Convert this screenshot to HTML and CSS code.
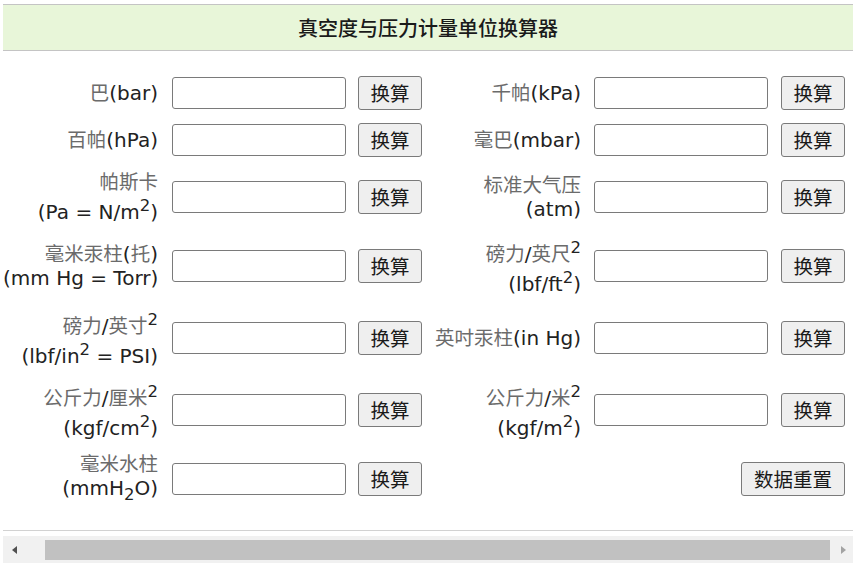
FILE: index.html
```html
<!DOCTYPE html>
<html lang="zh-CN">
<head>
<meta charset="utf-8">
<title>真空度与压力计量单位换算器</title>
<link rel="stylesheet" href="styles.css">
</head>
<body>
<div class="page">
  <div class="title-bar">真空度与压力计量单位换算器</div>
  <div class="grid">
    <label class="lbl"><span class="cn">巴</span>(bar)</label>
    <input class="field" type="text">
    <button class="btn">换算</button>
    <label class="lbl lbl-r"><span class="cn">千帕</span>(kPa)</label>
    <input class="field" type="text">
    <button class="btn">换算</button>

    <label class="lbl"><span class="cn">百帕</span>(hPa)</label>
    <input class="field" type="text">
    <button class="btn">换算</button>
    <label class="lbl lbl-r"><span class="cn">毫巴</span>(mbar)</label>
    <input class="field" type="text">
    <button class="btn">换算</button>

    <label class="lbl"><span class="cn">帕斯卡</span><br>(Pa = N/m<sup>2</sup>)</label>
    <input class="field" type="text">
    <button class="btn">换算</button>
    <label class="lbl lbl-r"><span class="cn">标准大气压</span><br>(atm)</label>
    <input class="field" type="text">
    <button class="btn">换算</button>

    <label class="lbl"><span class="cn">毫米汞柱</span>(<span class="cn">托</span>)<br>(mm Hg = Torr)</label>
    <input class="field" type="text">
    <button class="btn">换算</button>
    <label class="lbl lbl-r"><span class="cn">磅力</span>/<span class="cn">英尺</span><sup>2</sup><br>(lbf/ft<sup>2</sup>)</label>
    <input class="field" type="text">
    <button class="btn">换算</button>

    <label class="lbl"><span class="cn">磅力</span>/<span class="cn">英寸</span><sup>2</sup><br>(lbf/in<sup>2</sup> = PSI)</label>
    <input class="field" type="text">
    <button class="btn">换算</button>
    <label class="lbl lbl-r"><span class="cn">英吋汞柱</span>(in Hg)</label>
    <input class="field" type="text">
    <button class="btn">换算</button>

    <label class="lbl"><span class="cn">公斤力</span>/<span class="cn">厘米</span><sup>2</sup><br>(kgf/cm<sup>2</sup>)</label>
    <input class="field" type="text">
    <button class="btn">换算</button>
    <label class="lbl lbl-r"><span class="cn">公斤力</span>/<span class="cn">米</span><sup>2</sup><br>(kgf/m<sup>2</sup>)</label>
    <input class="field" type="text">
    <button class="btn">换算</button>

    <label class="lbl"><span class="cn">毫米水柱</span><br>(mmH<sub>2</sub>O)</label>
    <input class="field" type="text">
    <button class="btn">换算</button>
    <button class="btn btn-reset">数据重置</button>
  </div>
  <div class="sep"></div>
  <div class="hscroll">
    <div class="arrow-btn arrow-left"><span class="tri-left"></span></div>
    <div class="thumb"></div>
    <div class="arrow-btn arrow-right"><span class="tri-right"></span></div>
  </div>
</div>
</body>
</html>
```
FILE: styles.css
```css
html, body {
  margin: 0;
  padding: 0;
  background: #ffffff;
}

.page {
  padding: 4px 0 0 3px;
  font-family: "DejaVu Sans", "Noto Sans CJK SC", sans-serif;
  color: #222222;
}

.title-bar {
  height: 45px;
  border-top: 1px solid #c4c4c4;
  border-bottom: 1px solid #c4c4c4;
  background: #e8f6d9;
  display: flex;
  align-items: center;
  justify-content: center;
  font-family: "Noto Sans CJK SC", sans-serif;
  font-size: 20px;
  font-weight: 500;
  color: #1a1a1a;
  padding-right: 0;
}

.grid {
  display: grid;
  grid-template-columns: 157px 174px 64px 148px 175px 64px;
  grid-template-rows: 47px 47px 67px 71px 73px 71px 67px;
  column-gap: 12px;
  align-items: center;
  padding-top: 18px;
}

.lbl {
  text-align: right;
  font-size: 20px;
  line-height: 24px;
  color: #222222;
  padding-right: 2px;
  white-space: nowrap;
}

.lbl-r {
  padding-right: 1px;
}

.cn {
  font-family: "Noto Sans CJK SC", sans-serif;
  font-size: 19.5px;
  color: #6b6b6b;
}

.lbl sup,
.lbl sub {
  font-size: 16.5px;
}

.field {
  box-sizing: border-box;
  width: 174px;
  height: 32px;
  border: 1px solid #7a7a7a;
  border-radius: 3px;
  background: #ffffff;
  padding: 0 4px;
  margin: 0;
}

.btn {
  box-sizing: border-box;
  width: 64px;
  height: 34px;
  border: 1px solid #7a7a7a;
  border-radius: 3px;
  background: #efefef;
  font-family: "Noto Sans CJK SC", sans-serif;
  font-size: 19.5px;
  color: #1a1a1a;
  padding: 0;
  margin: 0;
  line-height: 1;
}

.btn-reset {
  grid-column: 4 / 7;
  justify-self: end;
  width: 104px;
}

.sep {
  height: 1px;
  background: #d2d2d2;
  margin-top: 18px;
}

.hscroll {
  margin-top: 5px;
  height: 27px;
  background: #f1f1f1;
  display: flex;
  align-items: center;
}

.arrow-btn {
  height: 100%;
  display: flex;
  align-items: center;
}

.arrow-left {
  width: 42px;
  padding-left: 9px;
  box-sizing: border-box;
}

.arrow-right {
  width: 23px;
  padding-left: 11px;
  box-sizing: border-box;
}

.tri-left {
  width: 0;
  height: 0;
  border-top: 4px solid transparent;
  border-bottom: 4px solid transparent;
  border-right: 5px solid #505050;
}

.tri-right {
  width: 0;
  height: 0;
  border-top: 4px solid transparent;
  border-bottom: 4px solid transparent;
  border-left: 5px solid #a3a3a3;
}

.thumb {
  flex: 1;
  height: 20px;
  background: #c1c1c1;
}
```
